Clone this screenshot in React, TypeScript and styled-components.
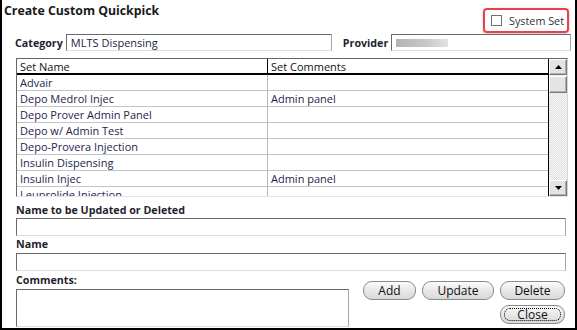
import React from "react";
import styled, { createGlobalStyle } from "styled-components";

const Global = createGlobalStyle`
  html, body { margin: 0; padding: 0; background: #fff; }
  * { box-sizing: border-box; }
`;

const Frame = styled.div`
  width: 577px;
  height: 330px;
  border-left: 2px solid #000;
  border-right: 2px solid #000;
  border-bottom: 2px solid #000;
  background: #fff;
  font-family: "Open Sans", "Noto Sans", sans-serif;
  font-size: 11px;
  color: #1e1e3c;
  display: flex;
  flex-direction: column;
  padding: 0 8px 0 14px;
  overflow: hidden;
`;

const TopRow = styled.div`
  display: flex;
  justify-content: space-between;
  align-items: flex-start;
  height: 34px;
  margin-left: -14px;
`;

const Title = styled.div`
  font-weight: 700;
  font-size: 12.3px;
  color: #1a1a1a;
  padding-top: 2px;
  padding-left: 2px;
`;

const SystemSetBox = styled.label`
  margin-top: 8px;
  margin-right: -2px;
  width: 86px;
  height: 25px;
  border: 2px solid #e8414a;
  border-radius: 4px;
  box-shadow: 0 1px 3px rgba(0, 0, 0, 0.25);
  display: flex;
  align-items: center;
  gap: 7px;
  padding-left: 6px;
  color: #333;
  font-size: 10.8px;
`;

const CheckBox = styled.span`
  width: 11px;
  height: 11px;
  border: 1px solid #707070;
  background: #fff;
  display: inline-block;
`;

const FieldRow = styled.div`
  display: flex;
  align-items: center;
  height: 17px;
`;

const BoldLabel = styled.span<{ $ml?: number }>`
  font-weight: 700;
  font-size: 10.7px;
  color: #1f1f2f;
  margin-left: ${(p) => p.$ml ?? 0}px;
  margin-right: 3px;
  white-space: nowrap;
`;

const TextBox = styled.div<{ $w?: number; $h?: number }>`
  width: ${(p) => (p.$w ? `${p.$w}px` : "auto")};
  flex: ${(p) => (p.$w ? "none" : "1")};
  height: ${(p) => p.$h ?? 17}px;
  border: 1px solid #6a6a6a;
  border-bottom-color: #dcdcdc;
  border-right-color: #a8a8a8;
  background: #fff;
  padding: 0 4px;
  display: flex;
  align-items: center;
  color: #1e1e3c;
  white-space: nowrap;
`;

const BlurBar = styled.span`
  width: 52px;
  height: 8px;
  background: linear-gradient(90deg, #b4b4b4, #c8c8c8 60%, #e4e4e4);
  filter: blur(0.6px);
`;

const TableBox = styled.div`
  margin-top: 7px;
  width: 552px;
  height: 139px;
  flex: none;
  border: 1px solid #666;
  border-right-color: #d6d6d6;
  border-bottom-color: #e6e6e6;
  display: flex;
  overflow: hidden;
`;

const TableBody = styled.div`
  flex: 1;
  display: flex;
  flex-direction: column;
  overflow: hidden;
`;

const Row = styled.div<{ $head?: boolean }>`
  display: grid;
  grid-template-columns: 251px 1fr;
  height: 16px;
  flex: none;
  border-bottom: ${(p) => (p.$head ? "2px solid #000" : "1px solid #c4c4c4")};
  color: ${(p) => (p.$head ? "#111" : "#25254f")};
`;

const Cell = styled.div<{ $head?: boolean }>`
  padding-left: 3px;
  line-height: 15px;
  white-space: nowrap;
  overflow: hidden;
  border-right: 1px solid ${(p) => (p.$head ? "#000" : "#b8b8b8")};
  &:last-child {
    border-right: none;
  }
`;

const ScrollBar = styled.div`
  width: 19px;
  border-left: 1px solid #000;
  display: flex;
  flex-direction: column;
  background-color: #f4f4f4;
  background-image: repeating-conic-gradient(#dedede 0 25%, #fafafa 0 50%);
  background-size: 2px 2px;
`;

const SbButton = styled.div`
  height: 16px;
  flex: none;
  background: #e4e4e4;
  border: 1px solid #fff;
  border-right-color: #7a7a7a;
  border-bottom-color: #7a7a7a;
  box-shadow: inset -1px -1px 0 #b0b0b0;
  display: flex;
  align-items: center;
  justify-content: center;
`;

const Thumb = styled(SbButton)`
  height: 17px;
  margin-top: 1px;
`;

const Spacer = styled.div<{ $h?: number }>`
  flex: ${(p) => (p.$h === undefined ? 1 : "none")};
  height: ${(p) => (p.$h === undefined ? "auto" : `${p.$h}px`)};
`;

const SectionLabel = styled(BoldLabel)`
  display: block;
  line-height: 14px;
  height: 14px;
`;

const FullBox = styled(TextBox)<{ $mt?: number }>`
  width: 550px;
  flex: none;
  margin-top: ${(p) => p.$mt ?? 2}px;
`;

const Bottom = styled.div`
  display: flex;
  gap: 14px;
`;

const CommentsCol = styled.div`
  display: flex;
  flex-direction: column;
`;

const CommentsBox = styled(TextBox)`
  margin-top: 2px;
`;

const Buttons = styled.div`
  display: grid;
  grid-template-columns: 53px 72px 65px;
  grid-auto-rows: 19px;
  column-gap: 6px;
  row-gap: 5px;
  padding-top: 8px;
`;

const PillButton = styled.div<{ $focus?: boolean; $col?: number }>`
  grid-column: ${(p) => p.$col ?? "auto"};
  height: 19px;
  border: 1px solid #8a8a8a;
  border-radius: 9px;
  background: linear-gradient(#fbfbfb, #e6e6e6 55%, #d9d9d9);
  display: flex;
  align-items: center;
  justify-content: center;
  color: #111;
  font-size: 12px;
  position: relative;
  ${(p) =>
    p.$focus
      ? `&::after { content: ""; position: absolute; inset: 2px 3px; border: 1px dotted #000; border-radius: 6px; }`
      : ""}
`;

const Arrow = ({ up }: { up?: boolean }) => (
  <svg width="7" height="4" viewBox="0 0 7 4">
    <path d={up ? "M0 4 L3.5 0 L7 4 Z" : "M0 0 L3.5 4 L7 0 Z"} fill="#000" />
  </svg>
);

const rows: [string, string][] = [
  ["Advair", ""],
  ["Depo Medrol Injec", "Admin panel"],
  ["Depo Prover Admin Panel", ""],
  ["Depo w/ Admin Test", ""],
  ["Depo-Provera Injection", ""],
  ["Insulin Dispensing", ""],
  ["Insulin Injec", "Admin panel"],
  ["Leuprolide Injection", ""],
];

export default function App() {
  return (
    <>
      <Global />
      <Frame>
        <TopRow>
          <Title>Create Custom Quickpick</Title>
          <SystemSetBox>
            <CheckBox />
            System Set
          </SystemSetBox>
        </TopRow>
        <FieldRow>
          <BoldLabel $ml={-1}>Category</BoldLabel>
          <TextBox $w={266}>MLTS Dispensing</TextBox>
          <BoldLabel $ml={11}>Provider</BoldLabel>
          <TextBox $w={180}>
            <BlurBar />
          </TextBox>
        </FieldRow>
        <TableBox>
          <TableBody>
            <Row $head>
              <Cell $head>Set Name</Cell>
              <Cell $head>Set Comments</Cell>
            </Row>
            {rows.map(([a, b]) => (
              <Row key={a}>
                <Cell>{a}</Cell>
                <Cell>{b}</Cell>
              </Row>
            ))}
          </TableBody>
          <ScrollBar>
            <SbButton>
              <Arrow up />
            </SbButton>
            <Thumb />
            <Spacer />
            <SbButton>
              <Arrow />
            </SbButton>
          </ScrollBar>
        </TableBox>
        <Spacer $h={6} />
        <SectionLabel>Name to be Updated or Deleted</SectionLabel>
        <FullBox $h={18} $mt={1} />
        <Spacer $h={1} />
        <SectionLabel>Name</SectionLabel>
        <FullBox $h={18} />
        <Spacer $h={2} />
        <Bottom>
          <CommentsCol>
            <SectionLabel>Comments:</SectionLabel>
            <CommentsBox $w={333} $h={38} />
          </CommentsCol>
          <Buttons>
            <PillButton>Add</PillButton>
            <PillButton>Update</PillButton>
            <PillButton>Delete</PillButton>
            <PillButton $col={3} $focus>
              Close
            </PillButton>
          </Buttons>
        </Bottom>
      </Frame>
    </>
  );
}
